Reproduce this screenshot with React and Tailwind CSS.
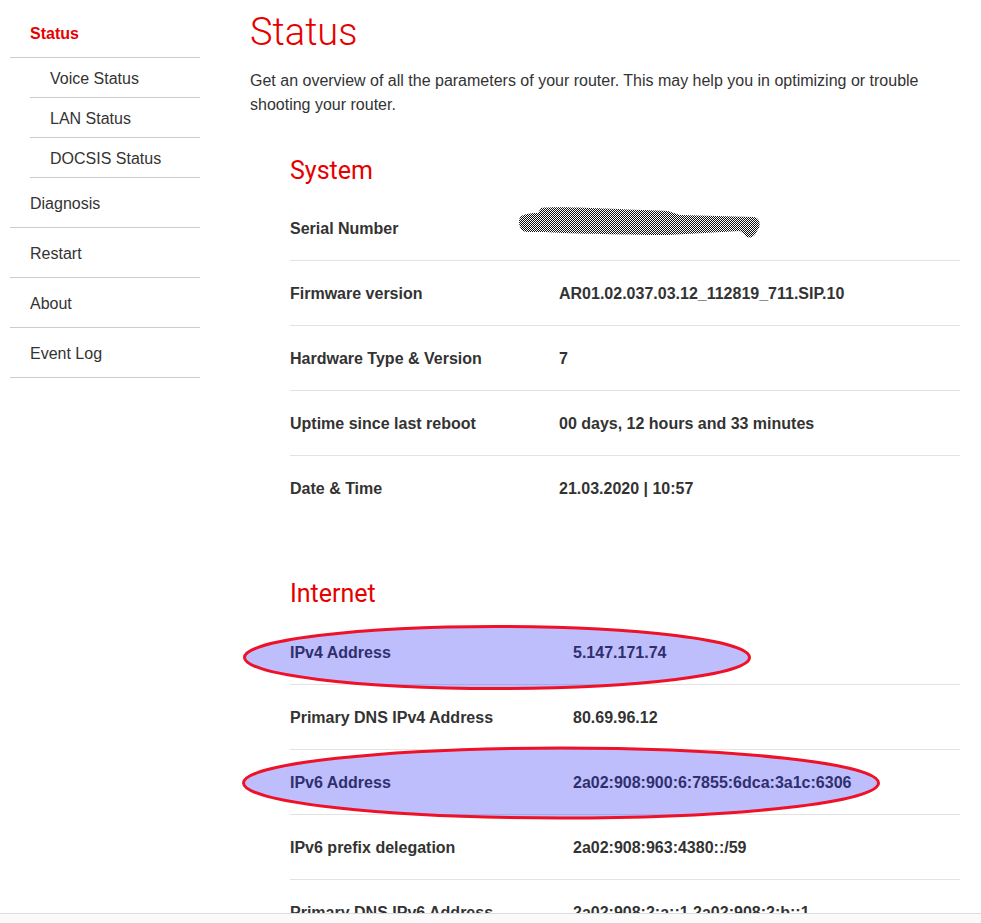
import React from 'react';

const sans = "font-['Liberation_Sans',Arial,sans-serif]";
const head = "font-['Roboto','Liberation_Sans',sans-serif]";

const subItems = ['Voice Status', 'LAN Status', 'DOCSIS Status'];
const mainItems = ['Diagnosis', 'Restart', 'About', 'Event Log'];

const systemRows = [
  { label: 'Serial Number', value: null },
  { label: 'Firmware version', value: 'AR01.02.037.03.12_112819_711.SIP.10' },
  { label: 'Hardware Type & Version', value: '7' },
  { label: 'Uptime since last reboot', value: '00 days, 12 hours and 33 minutes' },
  { label: 'Date & Time', value: '21.03.2020 | 10:57' },
];

const internetRows = [
  { label: 'IPv4 Address', value: '5.147.171.74', mark: 'v4' },
  { label: 'Primary DNS IPv4 Address', value: '80.69.96.12' },
  { label: 'IPv6 Address', value: '2a02:908:900:6:7855:6dca:3a1c:6306', mark: 'v6' },
  { label: 'IPv6 prefix delegation', value: '2a02:908:963:4380::/59' },
  { label: 'Primary DNS IPv6 Address', value: '2a02:908:2:a::1,2a02:908:2:b::1' },
];

// scribbled-out serial number
const Scribble = () => (
  <svg className="absolute left-[228px] top-[9px]" width="244" height="38" viewBox="0 0 244 38">
    <defs>
      <pattern id="chk" width="2" height="2" patternUnits="userSpaceOnUse">
        <rect width="2" height="2" fill="#fff" />
        <rect width="1" height="1" fill="#111" />
        <rect x="1" y="1" width="1" height="1" fill="#111" />
      </pattern>
    </defs>
    <path
      d="M1,16 C1,10 8,8 20,8 L23,3 C40,1 90,4 150,6 L162,10 L236,12 C243,13 243,22 239,26 C237,33 229,35 226,29 L222,26 L150,30 C100,30 40,28 28,27 L10,27 C3,27 1,22 1,16 Z"
      fill="url(#chk)"
    />
  </svg>
);

const Oval = ({ kind }) =>
  kind === 'v4' ? (
    <svg className="absolute left-[-48px] top-[4px] pointer-events-none" width="510" height="67" viewBox="0 0 510 67">
      <ellipse cx="255" cy="33.5" rx="252.5" ry="31" fill="rgba(40,40,245,0.3)" stroke="#ee1128" strokeWidth="3" />
    </svg>
  ) : (
    <svg className="absolute left-[-49px] top-[-4px] pointer-events-none" width="640" height="74" viewBox="0 0 640 74">
      <ellipse cx="320" cy="37" rx="317.5" ry="35" fill="rgba(40,40,245,0.3)" stroke="#ee1128" strokeWidth="3" />
    </svg>
  );

const Row = ({ label, value, labelWidth, last, mark }) => (
  <div className={`relative flex pt-[21px] pb-[19px] leading-6 text-base font-bold text-[#333] ${last ? 'border-b border-transparent' : 'border-b border-[#e3e3e3]'}`}>
    <div className={labelWidth}>{label}</div>
    <div>{value}</div>
    {value === null && <Scribble />}
    {mark && <Oval kind={mark} />}
  </div>
);

export default function App() {
  return (
    <div className={`h-[923px] w-full bg-white flex flex-col ${sans}`}>
      <div className="h-[913px] overflow-hidden flex pt-px">
        {/* sidebar */}
        <nav className="w-[200px] pl-[10px] shrink-0 text-base text-[#333]">
          <div className="pl-5 pt-[21px] pb-[11px] leading-6 border-b border-[#cccccc] font-bold text-[#e60000]">Status</div>
          {subItems.map((s) => (
            <div key={s} className="ml-5 pl-5 pt-[9px] pb-[6px] leading-6 border-b border-[#cccccc]">{s}</div>
          ))}
          {mainItems.map((m) => (
            <div key={m} className="pl-5 pt-[14px] pb-[11px] leading-6 border-b border-[#cccccc]">{m}</div>
          ))}
        </nav>

        {/* content */}
        <main className="ml-[50px] w-[710px]">
          <h1 className={`${head} mt-[8px] text-[38px] leading-[46px] font-light text-[#e60000]`}>Status</h1>
          <p className="mt-[14px] text-base leading-6 text-[#333]">
            Get an overview of all the parameters of your router. This may help you in optimizing or trouble shooting your router.
          </p>

          <section className="mt-[39px] pl-10">
            <h2 className={`${head} text-[25px] leading-[30px] text-[#e60000] mb-[10px]`}>System</h2>
            {systemRows.map((r, i) => (
              <Row key={r.label} {...r} labelWidth="w-[269px]" last={i === systemRows.length - 1} />
            ))}
          </section>

          <section className="mt-[58px] pl-10">
            <h2 className={`${head} text-[25px] leading-[30px] text-[#e60000] mb-[11px]`}>Internet</h2>
            {internetRows.map((r) => (
              <Row key={r.label} {...r} labelWidth="w-[283px]" />
            ))}
          </section>
        </main>
      </div>
      <div className="flex-1 border-t border-[#dddddd] bg-[#fafafa]" />
    </div>
  );
}
